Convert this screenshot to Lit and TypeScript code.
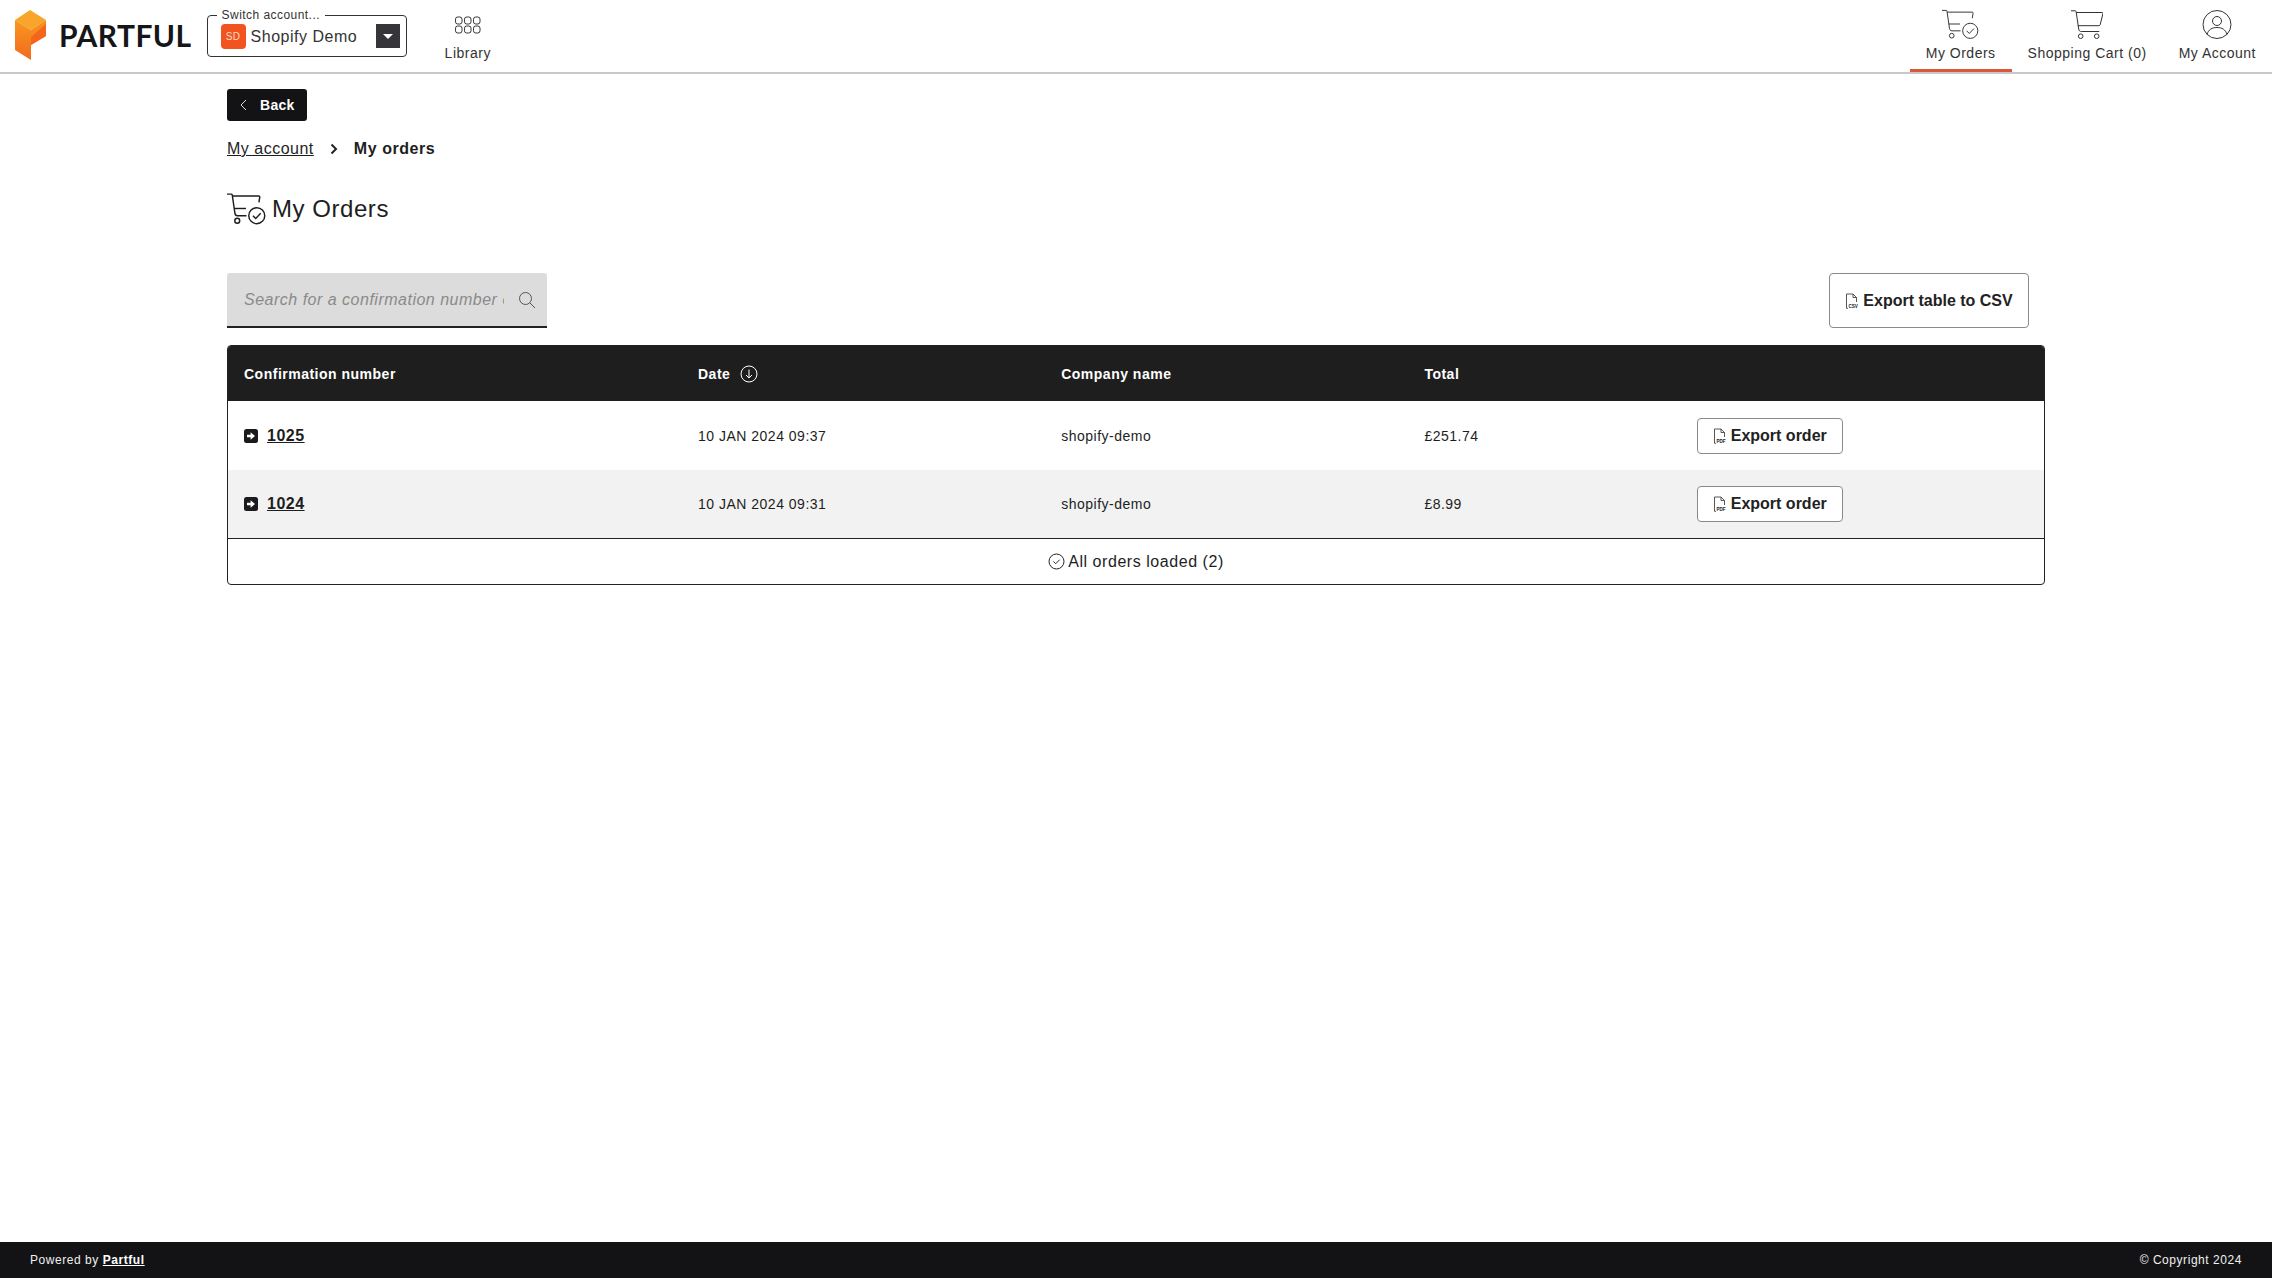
import { LitElement, html, css, svg } from "lit";
import { customElement } from "lit/decorators.js";

const cartPaths = svg`<path d="M0 1.300h4.200c.5 0 .8.3.9.7l2.600 17.500c.2 1.600 1 2.500 2.600 2.500h18" /><path d="M5.300 3H31c.7 0 1 .5.9 1.200l-2.700 11c-.2.700-.6 1-1.300 1H6.800" /><circle cx="9.700" cy="26.700" r="2.300"/><circle cx="25.700" cy="26.700" r="2.300"/>`;
const cartCheck = (w: number, h: number, sw: number) => html`<svg width=${w} height=${h} viewBox="0 0 38 31" fill="none" stroke="currentColor" stroke-width=${sw}><path d="M0 1h4.200c.5 0 .8.3.9.7l2.600 17.800c.2 1.600 1 2.500 2.600 2.500h8.700" /><path d="M5.300 2.800H31c.7 0 1 .5.9 1.200l-.8 5" /><path d="M7 15h11.500"/><circle cx="10" cy="27" r="2.400"/><circle cx="29" cy="22" r="7.800"/><path d="M25.300 22l2.700 2.700 4.800-5"/></svg>`;
const docIcon = (label: string) => html`<svg class="doc" width="15" height="16" viewBox="0 0 15 16" fill="none" stroke="#444" stroke-width=".9"><path d="M3 15.300H1.500V1H8l3.500 3.500V9"/><path d="M8 1v3.500h3.500"/><text x="3.400" y="15" font-size="4.600" font-weight="700" fill="#222" stroke="none" font-family="Liberation Sans">${label}</text></svg>`;
const rowArrow = html`<svg width="14" height="14" viewBox="0 0 14 14"><rect width="14" height="14" rx="2.500" fill="#1b1b1e"/><path d="M3 5.800h3.600V3.200L11 7l-4.400 3.800V8.200H3z" fill="#fff"/></svg>`;

@customElement("app-root")
export class AppRoot extends LitElement {
  static styles = css`
    :host { display: flex; flex-direction: column; min-height: 100vh; font-family: "Liberation Sans", Arial, sans-serif; color: #1e1e1e; letter-spacing: .5px; background: #fff; }
    * { box-sizing: border-box; }
    a { color: inherit; }
    header { display: flex; align-items: stretch; height: 74px; border-bottom: 2px solid #c8c8c8; padding-left: 15px; }
    .logo { display: flex; align-items: center; gap: 13px; margin-top: -2px; }
    .wordmark { font-family: Lato, sans-serif; font-weight: 700; font-size: 30px; letter-spacing: .45px; color: #16161a; line-height: 1; }
    .select { position: relative; align-self: flex-start; margin: 15px 0 0 15px; width: 200px; height: 42px; border: 1px solid #333; border-radius: 4px; display: flex; align-items: center; padding: 0 6px 0 13px; }
    .legend { position: absolute; left: 9px; top: -8px; background: #fff; padding: 0 5px; font-size: 12px; line-height: 14px; color: #333; letter-spacing: .45px; }
    .avatar { width: 25px; height: 25px; border-radius: 4px; background: #f2541f; color: #ffd9c8; font-size: 10px; display: flex; align-items: center; justify-content: center; margin-right: 5px; }
    .account { font-size: 16px; flex: 1; color: #333; padding-top: 1px; }
    .drop { width: 24px; height: 24px; background: #35353a; display: flex; align-items: center; justify-content: center; }
    .drop i { border: 5px solid transparent; border-top: 5px solid #fff; border-bottom: 0; }
    .nav { display: flex; flex-direction: column; align-items: center; padding: 9px 16px 0; font-size: 14px; height: 72px; color: #333; }
    .nav svg { height: 31px; margin-bottom: 6px; flex: none; display: block; }
    .nav span { line-height: 15px; }
    .nav.lib { margin-left: 22px; }
    .nav.active { border-bottom: 3px solid #d9573a; }
    .spacer { flex: 1; }
    main { flex: 1; padding: 15px 227px 0; }
    .back { display: inline-flex; align-items: center; height: 32px; width: 80px; background: #131316; border-radius: 3px; color: #fff; font-weight: 700; font-size: 14px; letter-spacing: .3px; padding-left: 13px; gap: 13px; vertical-align: top; }
    .crumbs { display: flex; align-items: center; margin-top: 18px; font-size: 16px; line-height: 20px; height: 20px; }
    .crumbs b { letter-spacing: .55px; }
    .crumbs svg { margin: 0 16px 0 16px; }
    h1 { display: flex; align-items: center; gap: 6px; margin: 32px 0 0; font-size: 24px; font-weight: 400; line-height: 36px; height: 36px; letter-spacing: .55px; }
    .tools { display: flex; justify-content: space-between; padding-right: 16px; margin-top: 46px; }
    .search { width: 320px; height: 55px; background: #dcdcdc; border-bottom: 2px solid #222; border-radius: 3px 3px 0 0; display: flex; align-items: center; padding: 0 11px 0 17px; gap: 14px; }
    .ph { flex: 1; min-width: 0; width: 100%; border: 0; padding: 1px 0 0; outline: 0; background: transparent; font-family: inherit; font-style: italic; font-size: 16px; letter-spacing: .5px; color: #222; }
    .ph::placeholder { color: #8a8a8a; opacity: 1; }
    .btn { display: flex; align-items: center; justify-content: center; background: #fff; border: 1px solid #8a8a8a; border-radius: 4px; font-weight: 700; font-family: inherit; color: #222; gap: 3px; padding: 0; }
    .btn.csv { width: 200px; height: 55px; font-size: 16px; letter-spacing: 0; }
    .btn.pdf { width: 146px; height: 36px; font-size: 16px; letter-spacing: 0; }
    .table { margin-top: 17px; border: 1px solid #222; border-radius: 4px; overflow: hidden; }
    .row { display: grid; grid-template-columns: 25% 20% 20% 15% 20%; align-items: center; padding: 0; }
    .row > div { padding-left: 16px; }
    .head { background: #1e1e1e; color: #fff; height: 55px; font-weight: 700; font-size: 14px; }
    .date { display: flex; align-items: center; gap: 10px; }
    .body { height: 69px; font-size: 14px; }
    .body.alt { background: #f2f2f2; border-bottom: 1px solid #222; }
    .num { display: flex; align-items: center; gap: 9px; font-size: 16px; font-weight: 700; }
    .loaded { height: 45px; display: flex; align-items: center; justify-content: center; font-size: 16px; gap: 3px; letter-spacing: .55px; }
    footer { background: #131316; color: #f0f0f0; height: 36px; display: flex; align-items: center; justify-content: space-between; padding: 0 30px; font-size: 12px; letter-spacing: .55px; }
    footer a { font-weight: 700; color: #fff; }
  `;

  private orderRow(num: string, date: string, total: string, alt = false) {
    return html`<div class="row body ${alt ? "alt" : ""}">
      <div class="num">${rowArrow}<a href="#">${num}</a></div>
      <div>${date}</div><div>shopify-demo</div><div>${total}</div>
      <div class="act"><button class="btn pdf">${docIcon("PDF")}Export order</button></div>
    </div>`;
  }

  render() {
    return html`
      <header>
        <div class="logo">
          <svg width="31" height="50" viewBox="0 0 31 50">
            <defs>
              <linearGradient id="l" x1="0" y1="0" x2="0" y2="1"><stop offset="0" stop-color="#f9981f"/><stop offset="1" stop-color="#f2691f"/></linearGradient>
            </defs>
            <path d="M15 0L31 10 16 20 0 10z" fill="#f9a52b"/>
            <path d="M0 10l16 10v30L0 40z" fill="url(#l)"/>
            <path d="M31 10v16L16 35V20z" fill="#f88a1e"/>
            <path d="M31 14v12l-15 9V27z" fill="#f5651d"/>
          </svg>
          <span class="wordmark">PARTFUL</span>
        </div>
        <div class="select">
          <span class="legend">Switch account...</span>
          <span class="avatar">SD</span><span class="account">Shopify Demo</span>
          <span class="drop"><i></i></span>
        </div>
        <div class="nav lib">
          <svg width="28" height="31" viewBox="0 0 28 31" fill="none" stroke="#333" stroke-width="1"><rect x="1.500" y="8" width="6.500" height="7" rx="2.200"/><rect x="10.500" y="8" width="6.500" height="7" rx="2.200"/><rect x="19.500" y="8" width="6.500" height="7" rx="2.200"/><rect x="1.500" y="17" width="6.500" height="7" rx="2.200"/><rect x="10.500" y="17" width="6.500" height="7" rx="2.200"/><rect x="19.500" y="17" width="6.500" height="7" rx="2.200"/></svg>
          <span>Library</span>
        </div>
        <div class="spacer"></div>
        <div class="nav active">${cartCheck(37, 31, 1)}<span>My Orders</span></div>
        <div class="nav"><svg width="32" height="31" viewBox="0 0 32 30" fill="none" stroke="currentColor" stroke-width="1">${cartPaths}</svg><span>Shopping Cart (0)</span></div>
        <div class="nav">
          <svg width="30" height="31" viewBox="0 0 30 30" fill="none" stroke="currentColor" stroke-width="1"><circle cx="15" cy="15" r="14"/><circle cx="15" cy="11.500" r="4.500"/><path d="M5 25c1.500-5 5-7 10-7s8.500 2 10 7"/></svg>
          <span>My Account</span>
        </div>
      </header>
      <main>
        <div class="back"><svg width="7" height="12" viewBox="0 0 7 12" fill="none" stroke="#ddd" stroke-width="1"><path d="M6 1L1 6l5 5"/></svg><span>Back</span></div>
        <div class="crumbs"><a href="#">My account</a><svg width="8" height="12" viewBox="0 0 8 12" fill="none" stroke="#222" stroke-width="2"><path d="M1.500 1.500L6 6l-4.500 4.500"/></svg><b>My orders</b></div>
        <h1>${cartCheck(39, 32, 1.4)}<span>My Orders</span></h1>
        <div class="tools">
          <div class="search"><input class="ph" placeholder="Search for a confirmation number or name" />
            <svg width="18" height="18" viewBox="0 0 18 18" fill="none" stroke="#555" stroke-width="1"><circle cx="7.500" cy="7.500" r="6"/><path d="M12 12l5 5"/></svg></div>
          <button class="btn csv">${docIcon("CSV")}Export table to CSV</button>
        </div>
        <div class="table">
          <div class="row head">
            <div>Confirmation number</div>
            <div class="date">Date <svg width="18" height="18" viewBox="0 0 18 18" fill="none" stroke="#fff" stroke-width="1"><circle cx="9" cy="9" r="8"/><path d="M9 4.500v8.500M6 10l3 3 3-3"/></svg></div>
            <div>Company name</div><div>Total</div><div></div>
          </div>
          ${this.orderRow("1025", "10 JAN 2024 09:37", "£251.74")}
          ${this.orderRow("1024", "10 JAN 2024 09:31", "£8.99", true)}
          <div class="loaded"><svg width="17" height="17" viewBox="0 0 17 17" fill="none" stroke="#222" stroke-width="1"><circle cx="8.500" cy="8.500" r="7.500"/><path d="M5.500 8.500l2.200 2.200 4-4"/></svg>All orders loaded (2)</div>
        </div>
      </main>
      <footer><span>Powered by <a href="#">Partful</a></span><span>© Copyright 2024</span></footer>
    `;
  }
}
